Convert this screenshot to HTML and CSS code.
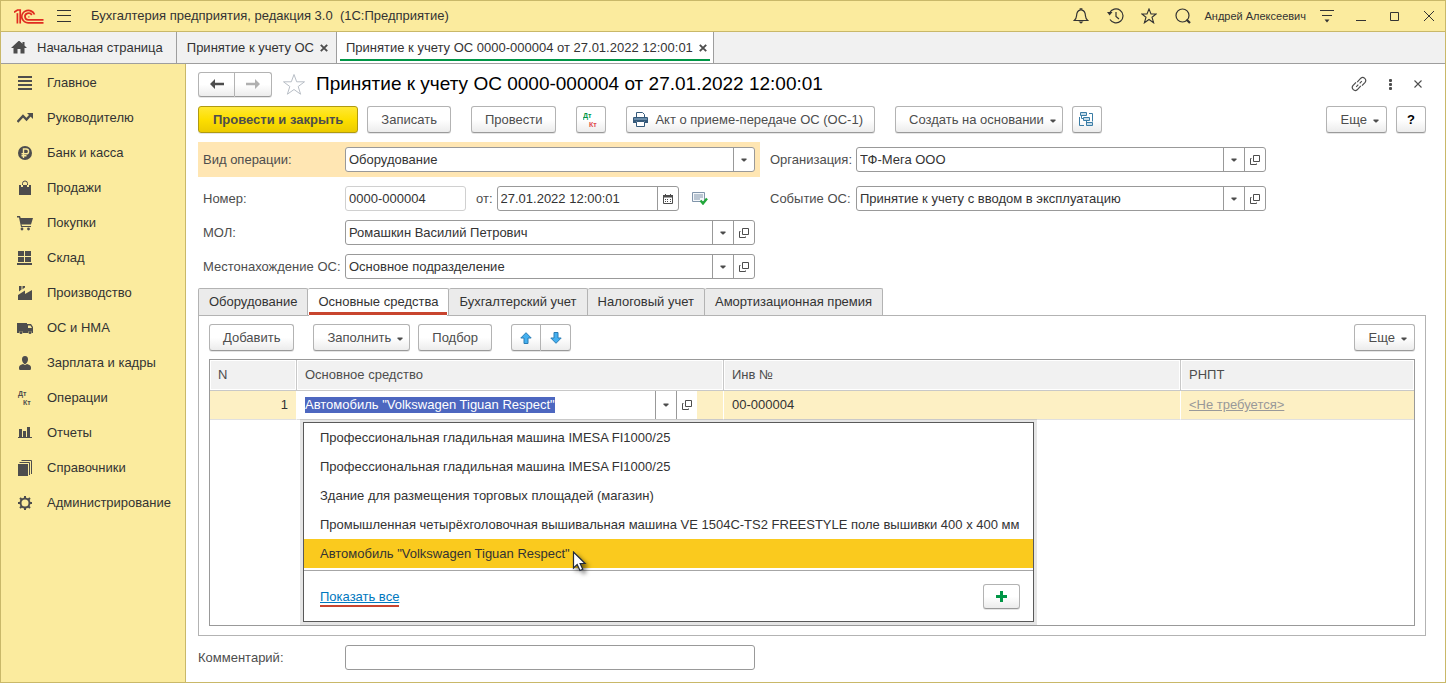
FILE: index.html
```html
<!DOCTYPE html>
<html lang="ru">
<head>
<meta charset="utf-8">
<title>Бухгалтерия предприятия, редакция 3.0</title>
<link rel="stylesheet" href="styles.css">
</head>
<body>
<svg class="sprite" aria-hidden="true">
  <symbol id="i-arrow" viewBox="0 0 6 4"><path d="M.5.500h5v1L3.500 3.500h-1L.5 1.500z" fill="#4d4d4d"/></symbol>
  <symbol id="i-open" viewBox="0 0 10 10"><path d="M3.500 .5h6v6h-6zM1.500 3.500H.5v6h6v-1" fill="none" stroke="#4d4d4d"/></symbol>
</svg>
<div class="window">
  <header class="titlebar">
    <svg class="logo" width="30" height="15" viewBox="0 0 30 15" fill="none" stroke="#e02b20" stroke-width="1.700">
      <path d="M0 3.400 3.500 1H6.200V14.500"/><path d="M3.400 4.200V14.500"/><path d="M20.500 5.500A6.600 6.200 0 1 0 15 13.800H29.500"/><path d="M17.800 6A3.600 3.400 0 1 0 15 10.900H29.500"/><path d="M14.500 7.800h.8"/>
    </svg>
    <button class="icon-btn" aria-label="Главное меню"><svg width="16" height="12" viewBox="0 0 16 12" stroke="#333"><path d="M1 .5h14M1 5.500h14M1 11.500h14"/></svg></button>
    <span class="app-name">Бухгалтерия предприятия, редакция 3.0&nbsp; (1С:Предприятие)</span>
    <div class="title-tools">
      <button class="icon-btn" aria-label="Уведомления"><svg width="16" height="16" viewBox="0 0 16 16" fill="none" stroke="#333" stroke-width="1.200"><path d="M1.300 12.500h13.400c-1.500-1.200-2-2-2.200-4.500C12.200 4 10.800 2.500 8.800 2.200V.8H7.200v1.400C5.200 2.500 3.800 4 3.500 8c-.2 2.500-.7 3.300-2.200 4.500z"/><path d="M5.500 13.500h5L8 15.800z" fill="#333" stroke="none"/></svg></button>
      <button class="icon-btn" aria-label="История"><svg width="17" height="16" viewBox="0 0 17 16" fill="none" stroke="#333" stroke-width="1.200"><path d="M2.600 5A7 7 0 1 1 3 11.500"/><path d="M9 4v4.500l3 2.500"/><path d="M0 4h5.500L2.600 7.500z" fill="#333" stroke="none"/></svg></button>
      <button class="icon-btn" aria-label="Избранное"><svg width="16" height="16" viewBox="0 0 16 16" fill="none" stroke="#333" stroke-width="1.100"><path d="m8 1 2 5h5.200L11 9.200l1.600 5.600L8 11.500l-4.600 3.300L5 9.200.8 6H6z"/></svg></button>
      <button class="icon-btn" aria-label="Поиск"><svg width="16" height="16" viewBox="0 0 16 16" fill="none" stroke="#333" stroke-width="1.200"><circle cx="7.500" cy="7.500" r="6.500"/><path d="m11.500 11.500 3.500 3.500" stroke-width="2.200"/></svg></button>
      <a class="user" href="#">Андрей Алексеевич</a>
      <button class="icon-btn" aria-label="Сервис"><svg width="16" height="14" viewBox="0 0 16 14" stroke="#333"><path d="M1 1.500h14M3 6.500h10"/><path d="M5.500 10.500h5L8 13.500z" fill="#333" stroke="none"/></svg></button>
      <button class="icon-btn" aria-label="Свернуть"><svg width="10" height="10" viewBox="0 0 10 10"><path d="M0 9.500h10" stroke="#333"/></svg></button>
      <button class="icon-btn" aria-label="Развернуть"><svg width="10" height="10" viewBox="0 0 10 10"><path d="M.5 1.500h8v8h-8z" fill="none" stroke="#333"/></svg></button>
      <button class="icon-btn" aria-label="Закрыть"><svg width="10" height="10" viewBox="0 0 10 10"><path d="m0 0 10 10M10 0 0 10" stroke="#333"/></svg></button>
    </div>
  </header>

  <nav class="page-tabs" aria-label="Открытые окна">
    <a class="page-tab home" href="#"><svg width="16" height="13" viewBox="0 0 16 13" fill="#4d4d4d"><path d="M7.500 0 0 7h2.500v5.500h4V8h3v4.500h4V7H16l-2.500-2.400V1h-2v1.700L8.500 0z"/></svg>Начальная страница</a>
    <a class="page-tab" href="#">Принятие к учету ОС <svg width="8" height="8" viewBox="0 0 8 8"><path d="m.8.8 6.400 6.400M7.200.8.8 7.200" stroke="#4d4d4d" stroke-width="1.900"/></svg></a>
    <a class="page-tab current" href="#">Принятие к учету ОС 0000-000004 от 27.01.2022 12:00:01 <svg width="8" height="8" viewBox="0 0 8 8"><path d="m.8.8 6.400 6.400M7.200.8.8 7.200" stroke="#4d4d4d" stroke-width="1.900"/></svg></a>
  </nav>

  <div class="body">
    <nav class="sections" aria-label="Разделы">
      <a href="#"><svg viewBox="0 0 16 16"><path d="M1 1h14v2H1zm0 4h14v2H1zm0 4h14v2H1zm0 4h14v2H1z"/></svg>Главное</a>
      <a href="#"><svg viewBox="0 0 16 16"><path d="M.5 12 6 6l3.500 3.500 4-4.500" fill="none" stroke="#4d4d4d" stroke-width="2.300"/><path d="M10 3h6v6z"/></svg>Руководителю</a>
      <a href="#"><svg viewBox="0 0 16 16"><circle cx="8" cy="8" r="7"/><path d="M6.500 13V4h2.700a2.200 2.200 0 0 1 0 4.800H4.500M4.500 10.800h5" fill="none" stroke="#fbea9b" stroke-width="1.400"/></svg>Банк и касса</a>
      <a href="#"><svg viewBox="0 0 16 16"><path d="M2 5h2v2h2V5h4v2h2V5h2v10H2z"/><path d="M5.500 5V3.500A2.500 2.500 0 0 1 8 1a2.500 2.500 0 0 1 2.500 2.500V5" fill="none" stroke="#4d4d4d"/></svg>Продажи</a>
      <a href="#"><svg viewBox="0 0 16 16"><path d="M0 1h3l.7 2H16l-2 6.500H4.500L5 11h9v1H4L2 2.500H0z"/><circle cx="5" cy="14" r="1.400"/><circle cx="11.500" cy="14" r="1.400"/></svg>Покупки</a>
      <a href="#"><svg viewBox="0 0 16 16"><path d="M1 1h6v5H1zm7 0h6v5H8zM1 7h6v5H1zm7 0h6v5H8zM0 13h15v2H0z"/></svg>Склад</a>
      <a href="#"><svg viewBox="0 0 16 16"><path d="M1 15V10l7-4.500V9l7-4v10z"/><path d="M2 1h2.500v3.500L2 6.500zM5.500 1H8v1.500L5.500 4.200z"/></svg>Производство</a>
      <a href="#"><svg viewBox="0 0 16 16"><path d="M0 3h10v1h4l2 3v6h-1a2 2 0 0 0-4 0H6a2 2 0 0 0-4 0H0zm11 2.500v2.500h4l-1.600-2.500z" fill-rule="evenodd"/><circle cx="4" cy="12.500" r="1.500"/><circle cx="13" cy="12.500" r="1.500"/></svg>ОС и НМА</a>
      <a href="#"><svg viewBox="0 0 16 16"><path d="M8 1c2.200 0 3 1.500 3 3.500S9.500 9 8 9 5 6.500 5 4.500 5.800 1 8 1zM6 9l2 1 2-1c3 .8 4 2 4 3.500 0 1.500 0 2.500-1 2.500H3c-1 0-1-1-1-2.500C2 11 3 9.800 6 9z"/></svg>Зарплата и кадры</a>
      <a href="#"><svg viewBox="0 0 16 18" class="dtkt"><text x="1" y="7">Дт</text><text x="6" y="16">Кт</text></svg>Операции</a>
      <a href="#"><svg viewBox="0 0 16 16"><path d="M2 4h3v8H2zm4 2h3v6H6zm4-4h3v10h-3zM1 12h14v1H1z"/></svg>Отчеты</a>
      <a href="#"><svg viewBox="0 0 16 16"><path d="M1 4h10v12H1z"/><path d="M2.500 2.500h10V15M4.500.5h10V14" fill="none" stroke="#4d4d4d"/></svg>Справочники</a>
      <a href="#"><svg viewBox="0 0 16 16" fill="none"><circle cx="8" cy="8" r="4.500" fill="none" stroke="#4d4d4d" stroke-width="2"/><path d="M8 1v2.500M8 12.500V15M1 8h2.500M12.500 8H15M3 3l1.800 1.800M11.200 11.200 13 13M3 13l1.800-1.800M11.200 4.800 13 3" stroke="#4d4d4d" stroke-width="2"/></svg>Администрирование</a>
    </nav>

    <main class="form">
      <div class="heading">
        <div class="btn-group">
          <button class="btn step" aria-label="Назад"><svg width="14" height="10" viewBox="0 0 14 10"><path d="M0 5 5 0v3.800h9v2.400H5V10z" fill="#4d4d4d"/></svg></button>
          <button class="btn step" aria-label="Вперед"><svg width="14" height="10" viewBox="0 0 14 10"><path d="M14 5 9 0v3.800H0v2.400h9V10z" fill="#b0b0b0"/></svg></button>
        </div>
        <button class="icon-btn" aria-label="В избранное"><svg width="24" height="23" viewBox="0 0 24 23"><path d="m12 1.500 2.700 7.300h7.800l-6.300 4.700 2.400 7.700-6.600-4.700-6.600 4.700 2.400-7.700-6.300-4.700h7.800z" fill="none" stroke="#b8bec6"/></svg></button>
        <h1>Принятие к учету ОС 0000-000004 от 27.01.2022 12:00:01</h1>
        <div class="heading-tools">
          <button class="icon-btn" aria-label="Получить ссылку"><svg width="16" height="16" viewBox="0 0 16 16" fill="none" stroke="#4d4d4d" stroke-width="1.200"><path d="M6.200 6.200 9.800 2.200a3 3 0 0 1 4.300 4.100L11 9.700M9.800 9.800 6.200 13.800a3 3 0 0 1-4.300-4.100L5 6.300M5.200 10.800 7.300 8.700M8.700 7.300l2.100-2.100"/></svg></button>
          <button class="icon-btn" aria-label="Еще действия"><svg width="3" height="11" viewBox="0 0 3 11" fill="#4d4d4d"><rect y="0" width="3" height="3" rx="1"/><rect y="4" width="3" height="3" rx="1"/><rect y="8" width="3" height="3" rx="1"/></svg></button>
          <button class="icon-btn" aria-label="Закрыть форму"><svg width="8" height="8" viewBox="0 0 8 8"><path d="m.5.5 7 7m0-7-7 7" stroke="#4d4d4d" stroke-width="1.100"/></svg></button>
        </div>
      </div>

      <div class="commands">
        <button class="btn primary">Провести и закрыть</button>
        <button class="btn">Записать</button>
        <button class="btn apart">Провести</button>
        <button class="btn square apart" aria-label="Дт Кт"><svg width="16" height="18" viewBox="0 0 16 18" class="dtkt"><text class="dt" x="0" y="7">Дт</text><text class="kt" x="6" y="16">Кт</text></svg></button>
        <button class="btn apart print"><svg width="15" height="15" viewBox="0 0 15 15"><path d="M3.500 6V.5h6l2 2V6" fill="#fff" stroke="#34597a"/><path d="M1 5h13q1 0 1 1v5h-3V9H3v2H0V6q0-1 1-1z" fill="#34597a"/><path d="M1 7h13" stroke="#9fc0da"/><path d="M3.500 9.500h8v5h-8z" fill="#fff" stroke="#34597a"/></svg>Акт о приеме-передаче ОС (ОС-1)</button>
        <button class="btn apart">Создать на основании<svg class="caret"><use href="#i-arrow"/></svg></button>
        <button class="btn square" aria-label="Структура подчиненности"><svg width="15" height="15" viewBox="0 0 15 15" fill="#c5dbe9" stroke="#3a7ca5"><path d="M1.500.5h6v3h-6zM4.500 5.500h6v3h-6zM7.500 10.500h6v3h-6z"/><path d="M2.500 3.500v3h2M7.500 8.500v3M10 1.500h3.500v8M.5 5v8.500H5" fill="none"/></svg></button>
        <button class="btn more">Еще<svg class="caret"><use href="#i-arrow"/></svg></button>
        <button class="btn square help">?</button>
      </div>

      <div class="fields">
        <div class="column">
          <div class="row mark">
            <label for="kind">Вид операции:</label>
            <span class="field pick"><select id="kind"><option>Оборудование</option></select><span class="part"><svg class="caret"><use href="#i-arrow"/></svg></span></span>
          </div>
          <div class="row">
            <label for="num">Номер:</label>
            <span class="field number"><input id="num" value="0000-000004"></span>
            <label class="from" for="date">от:</label>
            <span class="field date"><input id="date" value="27.01.2022 12:00:01"><button class="part" aria-label="Календарь"><svg width="10" height="10" viewBox="0 0 10 10"><path d="M.5 1.500h9v8h-9z" fill="none" stroke="#4d4d4d"/><path d="M0 1h10v2.500H0zM2 0h1v1H2zm5 0h1v1H7zM2 5h1v1H2zm2 0h1v1H4zm3 0h1v1H7zM2 7h1v1H2zm2 0h1v1H4zm3 0h1v1H7z" fill="#4d4d4d"/></svg></button></span>
            <svg class="posted" width="16" height="13" viewBox="0 0 16 13"><path d="M.5.500h12v9H.5z" fill="#f4f7fa" stroke="#8195ab"/><path d="M2 3h9M2 5h9M2 7h6" stroke="#8195ab"/><path d="m8.500 8.500 2.500 3 4-5" fill="none" stroke="#22a83a" stroke-width="2.300"/></svg>
          </div>
          <div class="row">
            <label for="mol">МОЛ:</label>
            <span class="field pick"><select id="mol"><option>Ромашкин Василий Петрович</option></select><span class="part"><svg class="caret"><use href="#i-arrow"/></svg></span><button class="part" aria-label="Открыть"><svg class="open"><use href="#i-open"/></svg></button></span>
          </div>
          <div class="row">
            <label for="place">Местонахождение ОС:</label>
            <span class="field pick"><select id="place"><option>Основное подразделение</option></select><span class="part"><svg class="caret"><use href="#i-arrow"/></svg></span><button class="part" aria-label="Открыть"><svg class="open"><use href="#i-open"/></svg></button></span>
          </div>
        </div>
        <div class="column right">
          <div class="row first">
            <label for="org">Организация:</label>
            <span class="field pick"><select id="org"><option>ТФ-Мега ООО</option></select><span class="part"><svg class="caret"><use href="#i-arrow"/></svg></span><button class="part" aria-label="Открыть"><svg class="open"><use href="#i-open"/></svg></button></span>
          </div>
          <div class="row">
            <label for="event">Событие ОС:</label>
            <span class="field pick"><select id="event"><option>Принятие к учету с вводом в эксплуатацию</option></select><span class="part"><svg class="caret"><use href="#i-arrow"/></svg></span><button class="part" aria-label="Открыть"><svg class="open"><use href="#i-open"/></svg></button></span>
          </div>
        </div>
      </div>

      <div class="tabs" role="tablist">
        <button role="tab">Оборудование</button>
        <button role="tab" aria-selected="true">Основные средства</button>
        <button role="tab">Бухгалтерский учет</button>
        <button role="tab">Налоговый учет</button>
        <button role="tab">Амортизационная премия</button>
      </div>

      <section class="panel">
        <div class="commands inner">
          <button class="btn">Добавить</button>
          <button class="btn apart">Заполнить<svg class="caret"><use href="#i-arrow"/></svg></button>
          <button class="btn">Подбор</button>
          <div class="btn-group apart">
            <button class="btn move" aria-label="Вверх"><svg width="12" height="12" viewBox="0 0 12 12"><path d="m6 .7 5.200 5.300H8v5.500H4V6H.8z" fill="#44b0f0" stroke="#2a7cb4"/></svg></button>
            <button class="btn move" aria-label="Вниз"><svg width="12" height="12" viewBox="0 0 12 12"><path d="M6 11.300.8 6H4V.5h4V6h3.200z" fill="#44b0f0" stroke="#2a7cb4"/></svg></button>
          </div>
          <button class="btn more">Еще<svg class="caret"><use href="#i-arrow"/></svg></button>
        </div>
        <div class="grid">
          <table>
            <colgroup><col class="c-n"><col class="c-asset"><col class="c-inv"><col></colgroup>
            <thead><tr><th>N</th><th>Основное средство</th><th>Инв №</th><th>РНПТ</th></tr></thead>
            <tbody><tr>
              <td class="n">1</td>
              <td class="edit">
                <div class="editor"><span class="value"><input aria-label="Основное средство" value="Автомобиль &quot;Volkswagen Tiguan Respect&quot;"></span><button class="part" aria-label="Выбрать"><svg class="caret"><use href="#i-arrow"/></svg></button><button class="part" aria-label="Открыть"><svg class="open"><use href="#i-open"/></svg></button></div>
                <div class="popup">
                  <ul>
                    <li>Профессиональная гладильная машина IMESA FI1000/25</li>
                    <li>Профессиональная гладильная машина IMESA FI1000/25</li>
                    <li>Здание для размещения торговых площадей (магазин)</li>
                    <li>Промышленная четырёхголовочная вышивальная машина VE 1504C-TS2 FREESTYLE поле вышивки 400 x 400 мм</li>
                    <li class="active"><span class="hover-text">Автомобиль "Volkswagen Tiguan Respect"<svg class="pointer" width="20" height="26" viewBox="0 0 20 26"><path d="M1.500 1v16l3.700-3.500 2.800 6 2.800-1.300-2.700-5.700h5z" fill="#fff" stroke="#222b3c" stroke-width="1.200"/></svg></span></li>
                  </ul>
                  <div class="popup-foot"><a href="#">Показать все</a><button class="btn add" aria-label="Создать"><svg width="11" height="11" viewBox="0 0 11 11"><path d="M4 0h3v4h4v3H7v4H4V7H0V4h4z" fill="#009646"/></svg></button></div>
                </div>
              </td>
              <td>00-000004</td>
              <td><a class="muted" href="#">&lt;Не требуется&gt;</a></td>
            </tr></tbody>
          </table>
        </div>
      </section>

      <div class="comment">
        <label for="comment">Комментарий:</label>
        <span class="field"><input id="comment"></span>
      </div>
    </main>
  </div>
</div>
</body>
</html>
```

FILE: styles.css
```css
* { box-sizing: border-box; }
body { margin: 0; font: 13px/16px "Liberation Sans", Arial, sans-serif; color: #333; background: #fff; }
svg { display: block; flex: none; }
a { color: inherit; text-decoration: none; }
button, input, select { font: inherit; color: inherit; margin: 0; }
button { background: none; border: 0; padding: 0; }
.sprite { position: absolute; width: 0; height: 0; }

.window { display: flex; flex-direction: column; min-height: 100vh; border: 1px solid #c9b869; }

.titlebar { display: flex; align-items: center; height: 31px; padding: 0 8px 0 13px; background: #fbeb9e; border-bottom: 1px solid #c9b869; }
.logo { margin-right: 12px; }
.icon-btn { display: flex; align-items: center; justify-content: center; flex: none; }
.app-name { margin-left: 19px; }
.title-tools { display: flex; align-items: center; gap: 18px; margin-left: auto; }
.title-tools .icon-btn { width: 16px; height: 16px; }
.user { font-size: 11px; margin: 0 -5px; }

.page-tabs { display: flex; height: 32px; background: #f1f1f1; border-bottom: 1px solid #9e9e9e; }
.page-tab { position: relative; display: flex; align-items: center; gap: 6px; padding: 0 8px 0 10px; border-right: 1px solid #9e9e9e; }
.home { gap: 10px; padding-right: 13px; }
.current { background: #fff; padding: 0 6px 0 9px; }
.current::after { content: ""; position: absolute; left: 3px; right: 3px; bottom: 2px; height: 2px; background: #009646; }

.body { display: flex; flex: 1; }
.sections { flex: none; width: 185px; padding-top: 1px; background: #fbeb9e; border-right: 1px solid #c9b869; }
.sections a { display: flex; align-items: center; gap: 14px; height: 35px; padding-left: 16px; }
.sections svg { width: 16px; height: 16px; fill: #4d4d4d; }
.sections .dtkt { height: 18px; }
.dtkt text { font: bold 7px "Liberation Sans", Arial, sans-serif; }
.dtkt .dt { fill: #009646; }
.dtkt .kt { fill: #e04848; }

.form { display: flex; flex-direction: column; flex: 1; min-width: 0; padding: 7px 19px 12px 12px; }
.heading { display: flex; align-items: center; height: 26px; }
.heading h1 { margin: 0 0 0 10px; font-size: 19px; line-height: 24px; font-weight: normal; color: #000; }
.btn-group + .icon-btn { margin-left: 10px; }
.heading-tools { display: flex; align-items: center; gap: 22px; margin-left: auto; padding-right: 4px; }

.btn { display: flex; align-items: center; justify-content: center; height: 27px; padding: 0 13px; border: 1px solid #b3b3b3; border-bottom-color: #9a9a9a; border-radius: 3px; background: linear-gradient(#fff 50%, #ececec); color: #4d4d4d; white-space: nowrap; box-shadow: 0 1px 0 #e6e6e6; }
.btn-group { display: flex; }
.btn-group .btn:first-child { border-radius: 3px 0 0 3px; }
.btn-group .btn:last-child { border-radius: 0 3px 3px 0; border-left: 0; }
.step { width: 37px; height: 25px; padding: 0; }
.move { width: 30px; padding: 0; }
.square { width: 30px; padding: 0; }
.primary { padding: 0 14px; background: linear-gradient(#ffe833, #fddf00 50%, #eccb00); border-color: #b09a10; font-weight: bold; }
.print { gap: 7px; padding: 0 11px 0 6px; }
.help { color: #000; font-weight: bold; }
.caret { width: 6px; height: 4px; }
.btn .caret { margin: 2px -7px 0 6px; }
.open { width: 10px; height: 10px; }
.more { margin-left: auto; padding: 0 14px; }

.commands { display: flex; gap: 9px; margin-top: 9px; }
.apart { margin-left: 11px; }
.inner { gap: 8px; margin: 0; }

.fields { display: flex; gap: 10px; margin-top: 9px; color: #4d4d4d; }
.column { flex: 0 1 562px; display: flex; flex-direction: column; gap: 9px; }
.row { display: flex; align-items: center; padding: 0 5px; }
.row > label:first-child { flex: none; width: 142px; white-space: nowrap; }
.mark { padding: 5px; background: #ffe6b3; }
.right { flex-basis: 496px; }
.right .row { padding: 0; }
.right .row > label:first-child { width: 86px; }
.right .first { padding: 5px 0; }
.field { display: grid; grid-template-columns: 1fr; grid-auto-flow: column; grid-auto-columns: 21px; flex: 0 1 410px; min-width: 0; height: 25px; border: 1px solid #999; border-radius: 3px; background: #fff; color: #333; }
.field input, .field select { grid-row: 1; grid-column: 1; width: 100%; min-width: 0; padding: 0 3px; border: 0; outline: 0; background: none; appearance: none; }
.field select { grid-column: 1 / 3; }
.pick { grid-template-columns: 1fr 21px; }
.pick > .part:nth-child(2) { grid-row: 1; grid-column: 2; pointer-events: none; }
.part { display: flex; align-items: center; justify-content: center; border-left: 1px solid #999; }
.number { flex-basis: 121px; border-color: #d0d0d0; }
.from { margin: 0 4px 0 10px; }
.date { flex-basis: 182px; }
.posted { margin-left: 13px; }

.tabs { display: flex; margin-top: 9px; }
.tabs button { height: 27px; padding: 0 10px; background: #ebebeb; border: 1px solid #b3b3b3; border-width: 1px 1px 0 0; border-radius: 2px 2px 0 0; }
.tabs button:first-child { border-left-width: 1px; }
.tabs [aria-selected] { position: relative; background: #fff; }
.tabs [aria-selected]::after { content: ""; position: absolute; left: 1px; right: 1px; bottom: -1px; height: 3px; background: #c8452f; border-bottom: 1px solid #fff; }

.panel { display: flex; flex-direction: column; flex: 1; padding: 8px 10px 9px; border: 1px solid #b3b3b3; }
.grid { flex: 1; margin-top: 8px; border: 1px solid #999; }
table { width: 100%; table-layout: fixed; border-collapse: separate; border-spacing: 0; }
.c-n { width: 87px; }
.c-asset { width: 427px; }
.c-inv { width: 457px; }
th { height: 31px; padding: 0 8px; text-align: left; font-weight: normal; color: #4d4d4d; background: #f1f1f1; border-right: 1px solid #c8c8c8; border-bottom: 1px solid #c8c8c8; box-shadow: inset 0 0 0 1px #fff; }
td { height: 29px; padding: 0 8px; background: #fdf0c4; border-right: 1px solid #fff; border-bottom: 1px solid #e0e0e0; }
th:last-child, td:last-child { border-right: 0; }
.n { text-align: right; }
.edit { position: relative; padding: 0; }
.editor { display: flex; width: 400px; height: 28px; background: #fff; }
.editor .part { width: 21px; }
.value { display: flex; align-items: center; flex: 1; padding-left: 8px; }
.value input { field-sizing: content; height: 16px; padding: 0; border: 0; outline: 0; background: #4d67c0; color: #fff; }
.muted { color: #999; text-decoration: underline; }

.popup { position: absolute; z-index: 2; top: 31px; left: 6px; width: 731px; border: 1px solid #595959; background: #fff; box-shadow: 0 0 0 3px rgba(0, 0, 0, .1); }
.popup ul { margin: 0; padding: 0 0 2px; list-style: none; border-bottom: 1px solid #a6a6a6; }
.popup li { display: flex; align-items: center; height: 29px; padding: 0 16px; white-space: nowrap; }
.popup .active { background: #faca1e; }
.hover-text { position: relative; }
.pointer { position: absolute; left: 100%; top: 5px; margin-left: 2px; filter: drop-shadow(3px 3px 2px rgba(0, 0, 0, .5)); }
.popup-foot { display: flex; align-items: center; justify-content: space-between; height: 50px; padding: 0 13px 0 16px; }
.popup-foot a { padding-top: 4px; color: #0078be; text-decoration: underline; border-bottom: 2px solid #c8452f; }
.add { width: 37px; height: 25px; padding: 0; }

.comment { display: flex; align-items: center; margin-top: 9px; color: #4d4d4d; }
.comment label { flex: none; width: 147px; }
```
